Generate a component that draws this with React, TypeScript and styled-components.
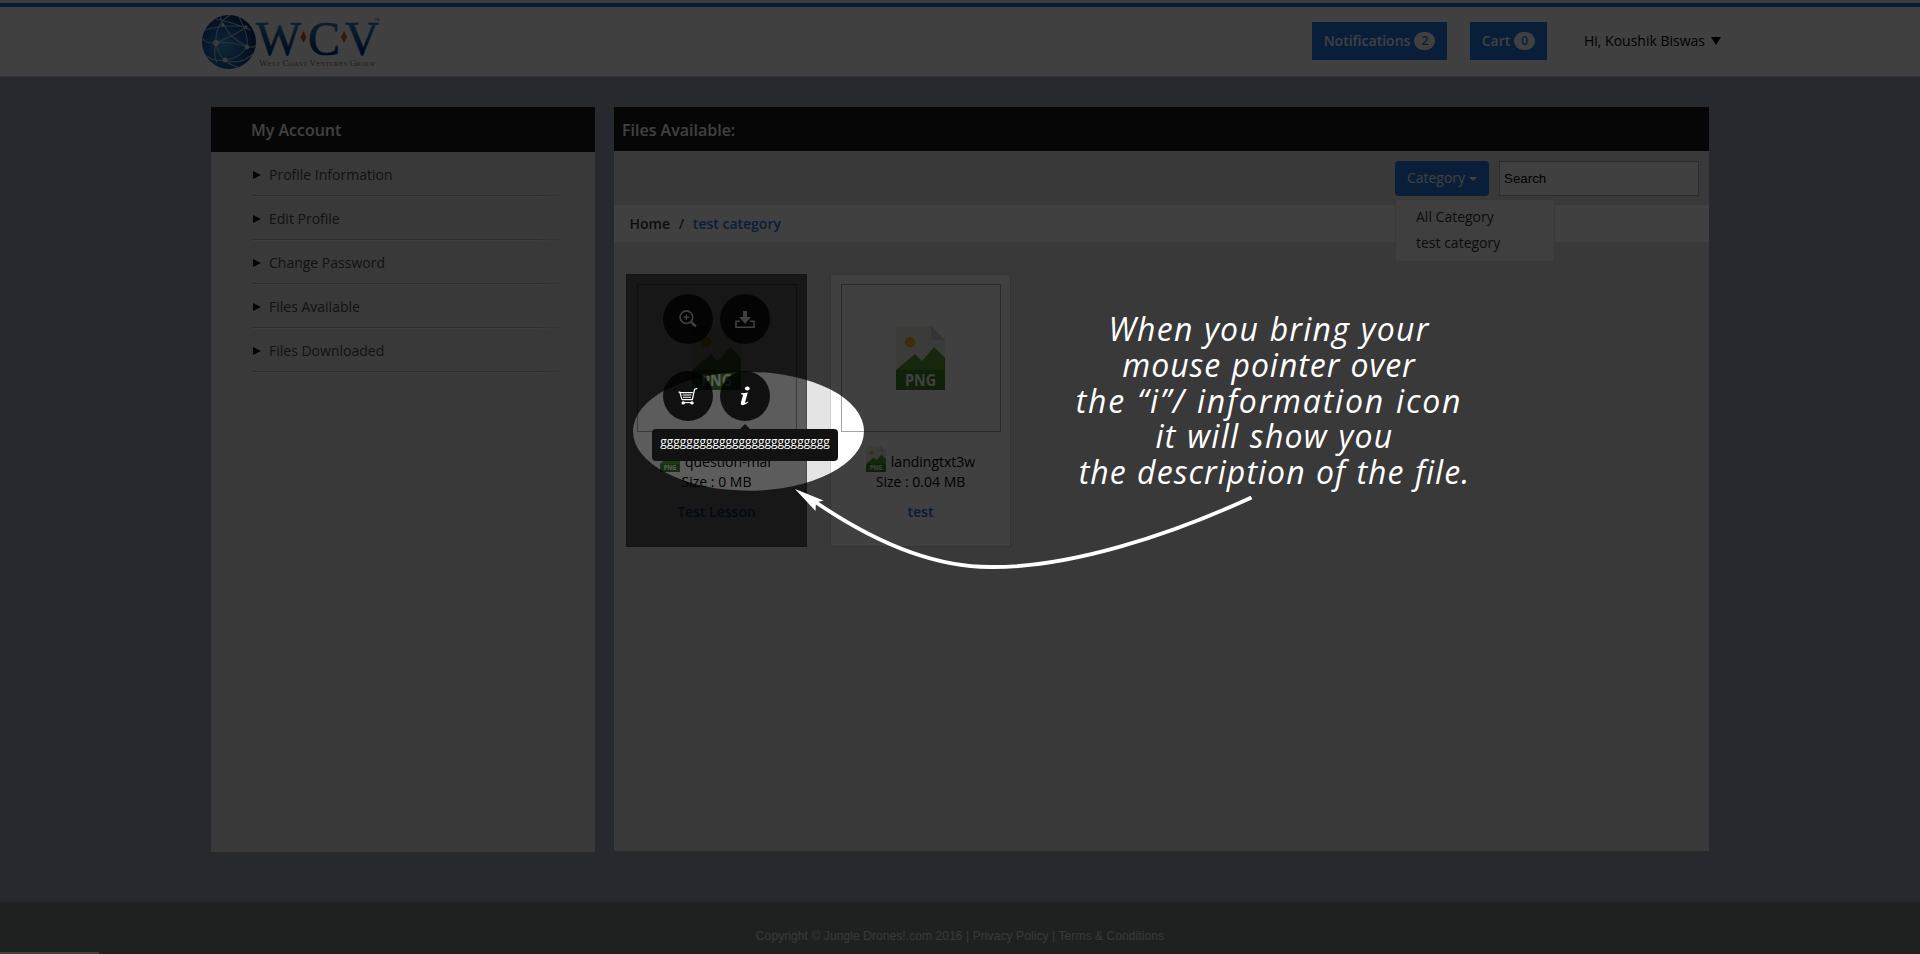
import React from "react";
import styled, { createGlobalStyle } from "styled-components";

const blue = "#2478e4";

const Global = createGlobalStyle`
  *, *::before, *::after { box-sizing: border-box; }
  body { margin: 0; background: #98a4b2; font-family: "Open Sans", "Noto Sans", sans-serif; font-size: 14px; color: #000; }
  ul { margin: 0; padding: 0; list-style: none; }
`;

const Page = styled.div`
  position: relative;
  width: 1920px;
  height: 954px;
  overflow: hidden;
  display: flex;
  flex-direction: column;
`;

const Header = styled.header`
  height: 77px;
  border-top: 3px solid #f6ecf2;
  border-bottom: 1px solid #d0d0d0;
  background: #fff;
  display: flex;
  flex-direction: column;
`;
const HeaderRule = styled.div`
  height: 4px;
  background: #1a70d8;
  flex: none;
`;
const HeaderInner = styled.div`
  flex: 1;
  display: flex;
  justify-content: space-between;
  padding: 5px 197px 0 200px;
`;
const HeaderActions = styled.div`
  display: flex;
  align-items: center;
  height: 38px;
  margin-top: 10px;
`;
const HeaderButton = styled.button<{ $width: number; $gap: number }>`
  width: ${(p) => p.$width}px;
  height: 38px;
  margin: 0 ${(p) => p.$gap}px 0 0;
  padding: 0 0 1px;
  border: 0;
  background: ${blue};
  color: #fff;
  font: 600 14px "Open Sans", sans-serif;
  display: flex;
  align-items: center;
  justify-content: center;
  gap: 4px;
`;
const Badge = styled.span`
  width: 21px;
  height: 18px;
  border-radius: 9px;
  background: #fff;
  color: ${blue};
  font-size: 12px;
  line-height: 18px;
  text-align: center;
`;
const UserMenu = styled.div`
  display: flex;
  align-items: center;
  gap: 6px;
  width: 139px;
  height: 38px;
  padding-bottom: 2px;
  white-space: nowrap;
`;
const Caret = styled.i<{ $w: number; $h: number; $color: string }>`
  position: relative;
  top: 1px;
  border: ${(p) => p.$w}px solid transparent;
  border-top: ${(p) => p.$h}px solid ${(p) => p.$color};
  border-bottom: 0;
`;

const Content = styled.main`
  display: flex;
  align-items: flex-start;
  gap: 19px;
  height: 825px;
  padding: 30px 211px 0;
`;
const Panel = styled.section<{ $width: number; $height: number }>`
  width: ${(p) => p.$width}px;
  height: ${(p) => p.$height}px;
  background: #e4e4e4;
`;
const PanelTitle = styled.h2<{ $height: number; $indent: number }>`
  height: ${(p) => p.$height}px;
  margin: 0;
  padding-left: ${(p) => p.$indent}px;
  background: #1a1a1a;
  color: #fff;
  font-size: 16px;
  font-weight: 600;
  line-height: 47px;
`;
const NavList = styled.ul`
  padding: 1px 32px 0 41px;
`;
const NavItem = styled.li`
  height: 44px;
  padding: 0 0 1px 1px;
  color: #484848;
  line-height: 43px;
  display: flex;
  align-items: center;
  gap: 8px;
  background:
    linear-gradient(90deg, #f8f8f8 90%, transparent) left bottom / 100% 1px no-repeat,
    linear-gradient(90deg, #b8b8b8 92%, #d8d8d8) left bottom 1px / 100% 1px no-repeat;
`;
const NavArrow = styled.i`
  border: 4.5px solid transparent;
  border-left: 8px solid #111;
  border-right: 0;
`;

const Toolbar = styled.div`
  height: 54px;
  display: flex;
  justify-content: flex-end;
  padding: 10px 10px 0;
  gap: 10px;
`;
const CategoryPicker = styled.div`
  position: relative;
`;
const CategoryButton = styled.button`
  width: 94px;
  height: 35px;
  border: 0;
  border-radius: 4px;
  padding: 0 0 2px;
  background: ${blue};
  color: #fff;
  font: 14px "Open Sans", sans-serif;
  display: flex;
  align-items: center;
  justify-content: center;
  gap: 4px;
`;
const CategoryMenu = styled.ul`
  position: absolute;
  top: 38px;
  left: 0;
  width: 160px;
  height: 63px;
  padding: 4px 0 0 20px;
  border: 1px solid #e0e0e0;
  border-radius: 3px;
  background: #fbfbfb;
  color: #333;
  line-height: 26px;
`;
const SearchField = styled.div`
  width: 200px;
  height: 35px;
  border: 1px solid #aaaeb4;
  background: #fff;
  padding-left: 4px;
  font: 13.33px/33px "Liberation Sans", Arial, sans-serif;
`;
const Breadcrumb = styled.nav`
  height: 37px;
  padding-left: 15.5px;
  background: #fff;
  line-height: 37px;
  font-weight: 600;
  color: #444;
  display: flex;
  gap: 8.7px;
`;
const Crumb = styled.span<{ $active?: boolean }>`
  color: ${(p) => (p.$active ? blue : "#333")};
`;
const Files = styled.div`
  display: flex;
  gap: 23px;
  padding: 32px 12px 0;
`;
const Card = styled.article`
  position: relative;
  width: 181px;
  height: 273px;
  padding: 9px 0 0;
  border: 1px solid #d0d0d0;
  background: #fff;
  display: flex;
  flex-direction: column;
  align-items: center;
`;
const Thumb = styled.div`
  width: 160px;
  height: 148px;
  border: 1px solid #a4a4a4;
  display: flex;
  justify-content: center;
  padding-top: 41px;
`;
const FileName = styled.div`
  height: 26px;
  margin-top: 14px;
  display: flex;
  gap: 5px;
  line-height: 31px;
`;
const FileSize = styled.div`
  height: 20px;
  line-height: 19px;
`;
const FileLink = styled.div`
  margin-top: 10px;
  line-height: 20px;
  font-weight: 600;
  color: #1c6cd4;
`;
const HoverLayer = styled.div`
  position: absolute;
  z-index: 1;
  inset: -1px;
  background: rgba(0, 0, 0, 0.64);
  display: grid;
  grid-template-columns: 50px 50px;
  grid-auto-rows: 50px;
  gap: 27px 7px;
  padding: 20px 0 0 37px;
`;
const RoundAction = styled.div`
  position: relative;
  width: 50px;
  height: 50px;
  border-radius: 50%;
  background: rgba(0, 0, 0, 0.82);
  display: flex;
  align-items: center;
  justify-content: center;
`;
const Tooltip = styled.div`
  position: absolute;
  top: 58px;
  left: -68px;
  width: 186px;
  height: 32px;
  border-radius: 4px;
  background: #121212;
  color: #fff;
  font-size: 12px;
  line-height: 25px;
  text-align: center;
  &::before {
    content: "";
    position: absolute;
    left: 88px;
    top: -5px;
    border: 5px solid transparent;
    border-top: 0;
    border-bottom-color: #121212;
  }
`;

const Footer = styled.footer`
  height: 52px;
  background: #7c8480;
  border-bottom: 1px solid #8c7c84;
  color: #dedede;
  font: 12px/68px "Liberation Sans", Arial, sans-serif;
  text-align: center;
  letter-spacing: 0.09px;
`;
const StatusStrip = styled.div`
  position: absolute;
  left: 0;
  bottom: 0;
  width: 99px;
  height: 2px;
  background: #fff;
`;

const Shade = styled.svg`
  position: absolute;
  z-index: 2;
  left: 0;
  top: 0;
`;
const Note = styled.div`
  position: absolute;
  z-index: 3;
  left: 1039px;
  top: 311px;
  width: 460px;
  color: #fff;
  font: italic 400 32px/35.8px "Open Sans", sans-serif;
  text-align: center;
  white-space: pre;
`;
const NoteLine = styled.div<{ $spacing: number; $shift?: number }>`
  letter-spacing: ${(p) => p.$spacing}px;
  word-spacing: 1px;
  padding-left: ${(p) => p.$shift || 0}px;
`;

const PngIcon = ({ width, height }: { width: number; height: number }) => (
  <svg width={width} height={height} viewBox="0 0 49 64">
    <path d="M0 0H35L49 14V64H0Z" fill="#e9e9e4" />
    <path d="M35 0L49 14H38Q35 14 35 10Z" fill="#cfcfc8" />
    <circle cx="14" cy="16" r="5.2" fill="#f2b72c" />
    <path d="M0 44L19 28L26 35L38 21L49 32V46H0Z" fill="#5a9c3a" />
    <rect y="44" width="49" height="20" fill="#3f8424" />
    <text x="24.5" y="60.3" textAnchor="middle" fontFamily="Open Sans" fontWeight="700" fontSize="16.5" textLength="31" lengthAdjust="spacingAndGlyphs" fill="#fff">PNG</text>
  </svg>
);

const Subtitle = styled.text`
  font: 8px "Liberation Serif", serif;
  font-variant: small-caps;
  fill: #8a8484;
`;

const Logo = () => (
  <svg width="182" height="60" viewBox="200 12 182 60">
    <defs>
      <radialGradient id="globe" cx="40%" cy="58%" r="62%">
        <stop offset="0" stopColor="#3ba0dc" />
        <stop offset="0.55" stopColor="#1a64b0" />
        <stop offset="1" stopColor="#082a6c" />
      </radialGradient>
      <linearGradient id="letters" x1="0" y1="0" x2="0" y2="1">
        <stop offset="0.1" stopColor="#2c94c8" />
        <stop offset="0.8" stopColor="#042c74" />
      </linearGradient>
    </defs>
    <circle cx="229" cy="42" r="27" fill="url(#globe)" />
    <g fill="none" stroke="#a9c4e2" strokeWidth="1.1">
      <path d="M205 30Q224 24 246 27M216 19Q231 22 251 30M220 16Q226 37 249 47M230 15Q215 24 216 43Q213 55 217 63" />
      <path d="M203 39Q207 44 216 43Q237 34 246 27M216 43Q230 41 247 47Q254 48 256 45M216 43Q218 55 225 60Q233 67 239 67" />
      <path d="M225 60Q239 59 247 47Q249 36 239 17M225 60Q241 66 254 53M207 56Q214 62 225 60" />
    </g>
    <g fill="#e4eefa">
      <circle cx="216" cy="43" r="3" />
      <circle cx="225" cy="60" r="2.4" />
      <circle cx="247" cy="47" r="2.2" />
      <circle cx="223" cy="25" r="1.7" />
      <circle cx="246" cy="27" r="1.4" />
    </g>
    <g fill="url(#letters)" stroke="url(#letters)" strokeWidth="0.7" fontFamily="Liberation Serif" fontSize="48">
      <text x="256" y="55" textLength="45" lengthAdjust="spacingAndGlyphs">W</text>
      <text x="308" y="55" textLength="32" lengthAdjust="spacingAndGlyphs">C</text>
      <text x="345" y="55" textLength="34" lengthAdjust="spacingAndGlyphs">V</text>
    </g>
    <path d="M303.5 31L306.5 37L303.5 43L300.5 37ZM344 31L347 37L344 43L341 37Z" fill="#e0542c" />
    <text x="374" y="21" fontFamily="Liberation Sans" fontSize="4" fill="#456">TM</text>
    <Subtitle x="259" y="66" textLength="116" lengthAdjust="spacingAndGlyphs">West Coast Ventures Group</Subtitle>
  </svg>
);

const ZoomIcon = () => (
  <svg width="20" height="20" viewBox="0 0 20 20" fill="none" stroke="#fff">
    <circle cx="8.4" cy="8.2" r="6.3" strokeWidth="1.6" />
    <path d="M8.4 5.4V11M5.6 8.2H11.2" strokeWidth="1.4" />
    <path d="M13 12.8L17.8 17.4" strokeWidth="2.5" />
  </svg>
);
const DownloadIcon = () => (
  <svg width="20" height="20" viewBox="0 0 20 20">
    <path d="M8 2H12V8H16L10 15L4 8H8Z" fill="#fff" />
    <path d="M5 12.2H1V18.3H19V12.2H15" fill="none" stroke="#fff" strokeWidth="1.6" />
  </svg>
);
const CartIcon = () => (
  <svg width="20" height="20" viewBox="0 0 20 20" fill="none" stroke="#fff">
    <path d="M19.3 2.4L16.6 3.2L14.3 13.6H4" strokeWidth="1.3" />
    <path d="M0.5 6.2H1.8L4 13.6M1.8 6.7H14.8" strokeWidth="1.2" />
    <path d="M4.5 9H13.4M5 11.3H13" strokeWidth="1.1" />
    <path d="M4.5 16.6H14" strokeWidth="1.1" />
    <circle cx="5.2" cy="16.9" r="1.7" fill="#fff" stroke="none" />
    <circle cx="14" cy="16.9" r="1.7" fill="#fff" stroke="none" />
  </svg>
);
const InfoIcon = () => (
  <svg width="20" height="20" viewBox="0 0 20 20">
    <ellipse cx="12.3" cy="2.6" rx="2.4" ry="2" fill="#fff" />
    <path d="M6 7.3Q10 7.1 12.8 6.4L10.1 16.2Q10 17.6 12.9 15.4L13.5 16.1Q10.4 19.4 7.6 19.3Q5.2 19 6 16.3L8 9.2Q8.2 8.2 6 8.3Z" fill="#fff" />
  </svg>
);

const links = ["Profile Information", "Edit Profile", "Change Password", "Files Available", "Files Downloaded"];
const files = [
  { name: "question-mar", size: "0 MB", lesson: "Test Lesson", hovered: true },
  { name: "landingtxt3w", size: "0.04 MB", lesson: "test", hovered: false },
];

export default function App() {
  return (
    <Page>
      <Global />
      <Header>
        <HeaderRule />
        <HeaderInner>
          <Logo />
          <HeaderActions>
            <HeaderButton $width={135} $gap={23}>Notifications<Badge>2</Badge></HeaderButton>
            <HeaderButton $width={77} $gap={37}>Cart<Badge>0</Badge></HeaderButton>
            <UserMenu>Hi, Koushik Biswas<Caret $w={5.5} $h={8} $color="#000" /></UserMenu>
          </HeaderActions>
        </HeaderInner>
      </Header>
      <Content>
        <Panel $width={384} $height={745}>
          <PanelTitle $height={45} $indent={40}>My Account</PanelTitle>
          <NavList>
            {links.map((label) => (
              <NavItem key={label}><NavArrow />{label}</NavItem>
            ))}
          </NavList>
        </Panel>
        <Panel $width={1095} $height={744}>
          <PanelTitle $height={44} $indent={8}>Files Available:</PanelTitle>
          <Toolbar>
            <CategoryPicker>
              <CategoryButton>Category<Caret $w={4} $h={4} $color="#fff" /></CategoryButton>
              <CategoryMenu>
                <li>All Category</li>
                <li>test category</li>
              </CategoryMenu>
            </CategoryPicker>
            <SearchField>Search</SearchField>
          </Toolbar>
          <Breadcrumb>
            <Crumb>Home</Crumb>
            <span>/</span>
            <Crumb $active>test category</Crumb>
          </Breadcrumb>
          <Files>
            {files.map((file) => (
              <Card key={file.name}>
                <Thumb><PngIcon width={49} height={64} /></Thumb>
                <FileName><PngIcon width={20} height={26} />{file.name}</FileName>
                <FileSize>Size : {file.size}</FileSize>
                <FileLink>{file.lesson}</FileLink>
                {file.hovered && (
                  <HoverLayer>
                    <RoundAction><ZoomIcon /></RoundAction>
                    <RoundAction><DownloadIcon /></RoundAction>
                    <RoundAction><CartIcon /></RoundAction>
                    <RoundAction>
                      <InfoIcon />
                      <Tooltip>gggggggggggggggggggggggggg</Tooltip>
                    </RoundAction>
                  </HoverLayer>
                )}
              </Card>
            ))}
          </Files>
        </Panel>
      </Content>
      <Footer>Copyright © Jungle Drones!.com 2016 | Privacy Policy | Terms &amp; Conditions</Footer>
      <StatusStrip />
      <Shade width="1920" height="954" viewBox="0 0 1920 954">
        <path
          fillRule="evenodd"
          fill="#000"
          fillOpacity="0.75"
          d="M0 0H1920V954H0ZM633 431.3A115.5 59.4 0 0 0 864 431.3A115.5 59.4 0 0 0 633 431.3Z"
        />
        <path d="M814 501C875 543 935 567 990 567C1070 568 1170 535 1251.5 497.5" fill="none" stroke="#fff" strokeWidth="3.8" />
        <path d="M795 489L823.5 500.5L816 502.5L815.5 511Z" fill="#fff" />
      </Shade>
      <Note>
        <NoteLine $spacing={1.25}>When you bring your</NoteLine>
        <NoteLine $spacing={0.95}>mouse pointer over</NoteLine>
        <NoteLine $spacing={1.8}>the “i”/ information icon</NoteLine>
        <NoteLine $spacing={1.25} $shift={11}>it will show you</NoteLine>
        <NoteLine $spacing={1.05} $shift={11}>the description of the file.</NoteLine>
      </Note>
    </Page>
  );
}
